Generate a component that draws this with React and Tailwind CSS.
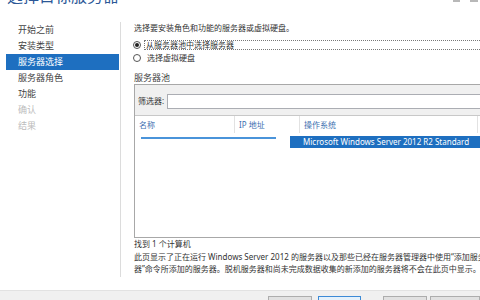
import React from "react";

const navItems = [
  { t: "开始之前", s: "normal" },
  { t: "安装类型", s: "normal" },
  { t: "服务器选择", s: "active" },
  { t: "服务器角色", s: "normal" },
  { t: "功能", s: "normal" },
  { t: "确认", s: "disabled" },
  { t: "结果", s: "disabled" },
];

export default function App() {
  return (
    <div
      className="w-[480px] h-[300px] overflow-hidden bg-white flex flex-col text-[#333]"
      style={{ fontFamily: '"Noto Sans", "Noto Sans CJK SC", sans-serif' }}
    >
      {/* title row */}
      <div className="h-[22px] flex items-start shrink-0">
        <div className="-mt-[13px] ml-[7px] text-[16px] leading-[18px] text-[#2b5797] whitespace-nowrap">
          选择目标服务器
        </div>
        <div className="ml-auto mr-[2px] flex gap-[10px]">
          <span className="w-[7px] h-[2px] bg-[#b8b8b8]" />
          <span className="w-[8px] h-[2px] bg-[#b8b8b8]" />
        </div>
      </div>

      {/* body */}
      <div className="flex h-[268px] shrink-0">
        {/* nav */}
        <div className="w-[121px] h-[255px] shrink-0 border-r border-[#dcdcdc] pl-[6px] pr-[1px]">
          {navItems.map((n) => (
            <div
              key={n.t}
              className={
                "h-[16px] leading-[16px] pl-[12px] text-[9px] whitespace-nowrap " +
                (n.s === "active"
                  ? "bg-[#1e6fc0] text-white"
                  : n.s === "disabled"
                  ? "text-[#bcbcbc]"
                  : "text-[#444]")
              }
            >
              {n.t}
            </div>
          ))}
        </div>

        {/* content */}
        <div className="flex-1 min-w-0 pl-[13px] text-[8px]">
          <div className="h-[12px] leading-[12px] whitespace-nowrap">
            选择要安装角色和功能的服务器或虚拟硬盘。
          </div>

          <div className="mt-[5px] h-[12px] flex items-center">
            <span className="w-[8px] h-[8px] -ml-[1px] rounded-full border border-[#555] bg-white flex items-center justify-center">
              <span className="w-[4px] h-[4px] rounded-full bg-[#222]" />
            </span>
            <div className="ml-[3px] flex-1 h-[10px] border border-dotted border-[#777] border-r-0 leading-[8px] pl-[1px] whitespace-nowrap">
              从服务器池中选择服务器
            </div>
          </div>
          <div className="mt-[1px] h-[12px] flex items-center">
            <span className="w-[8px] h-[8px] -ml-[1px] rounded-full border border-[#555] bg-white" />
            <span className="ml-[6px] whitespace-nowrap">选择虚拟硬盘</span>
          </div>

          <div className="mt-[8px] h-[12px] leading-[12px] text-[9px] text-[#444] whitespace-nowrap">
            服务器池
          </div>

          {/* pool box */}
          <div className="w-[400px] h-[154px] border border-[#a8a8a8] bg-white flex flex-col">
            <div className="h-[31px] bg-[#f0f0f0] border-b border-[#c8c8c8] flex items-center pl-[3px] pt-[2px]">
              <span className="w-[29px] whitespace-nowrap">筛选器:</span>
              <div className="flex-1 h-[15px] border border-[#abadb3] bg-white" />
            </div>
            <div className="h-[17px] flex text-[#3d6fb0] leading-[17px]">
              <div className="w-[100px] pl-[4px] border-r border-[#e2e2e2]">名称</div>
              <div className="w-[65px] pl-[4px] border-r border-[#e2e2e2]">IP 地址</div>
              <div className="w-[178px] pl-[4px] border-r border-[#e2e2e2]">操作系统</div>
              <div className="flex-1" />
            </div>
            <div className="mt-[3px] h-[12px] flex">
              <div className="w-[155px] bg-white pt-[1px]">
                <div className="ml-[6px] w-[135px] h-[2px] bg-[#4a94da]" />
              </div>
              <div className="flex-1 bg-[#1e6fc0] text-white pl-[13px] leading-[12px] whitespace-nowrap">
                Microsoft Windows Server 2012 R2 Standard
              </div>
            </div>
          </div>

          <div className="h-[12px] leading-[12px] whitespace-nowrap">找到 1 个计算机</div>
          <div className="mt-[1px] leading-[11.5px] whitespace-nowrap">
            <div>此页显示了正在运行 Windows Server 2012 的服务器以及那些已经在服务器管理器中使用“添加服务</div>
            <div>器”命令所添加的服务器。脱机服务器和尚未完成数据收集的新添加的服务器将不会在此页中显示。</div>
          </div>
        </div>
      </div>

      {/* bottom strip */}
      <div className="flex-1 bg-[#f0f0f0] border-t border-[#e2e2e2] flex items-start pt-[5px]">
        <div className="ml-[268px] w-[50px] h-[10px] border border-[#adadad] bg-[#e1e1e1]" />
        <div className="ml-[6px] w-[49px] h-[10px] border border-[#3c8ad6] bg-[#e5f1fb]" />
        <div className="ml-[22px] w-[50px] h-[10px] border border-[#adadad] bg-[#e1e1e1]" />
        <div className="ml-[3px] w-[50px] h-[10px] border border-[#adadad] bg-[#e1e1e1] shrink-0" />
      </div>
    </div>
  );
}
